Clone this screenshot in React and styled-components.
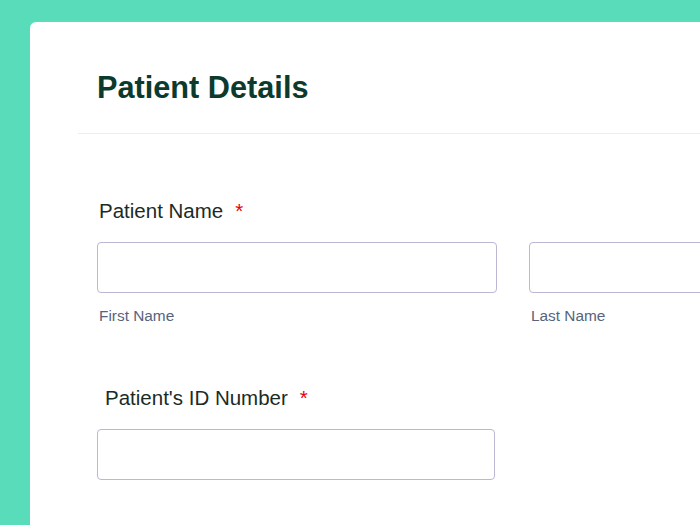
import React from 'react';
import styled, { createGlobalStyle } from 'styled-components';

const GlobalStyle = createGlobalStyle`
    html, body {
        margin: 0;
        padding: 0;
        background: #58dcb9;
    }
    body {
        font-family: "Liberation Sans", Arial, sans-serif;
    }
`;

const Page = styled.div`
    height: 525px;
    padding: 22px 0 0 30px;
    box-sizing: border-box;
    overflow: hidden;
`;

const Card = styled.div`
    background: #ffffff;
    border-top-left-radius: 6px;
    min-height: 503px;
    width: 760px;
`;

const Header = styled.div`
    margin-left: 48px;
    padding: 48px 0 27px 19px;
    border-bottom: 1px solid #ececf2;
`;

const Title = styled.h1`
    margin: 0;
    font-size: 30.7px;
    line-height: 36px;
    font-weight: bold;
    color: #0c3b2d;
`;

const Form = styled.div`
    padding: 65px 0 0 67px;
    display: flex;
    flex-direction: column;
`;

const Field = styled.div`
    display: flex;
    flex-direction: column;
    margin-bottom: ${(p) => p.$gap || 0}px;
`;

const Label = styled.label`
    display: block;
    margin: 0 0 19px ${(p) => p.$indent || 2}px;
    font-size: 20.5px;
    line-height: 24px;
    color: #1a2b26;
`;

const Required = styled.span`
    color: #e3000f;
    margin-left: 12px;
`;

const Row = styled.div`
    display: flex;
    gap: 32px;
`;

const Column = styled.div`
    display: flex;
    flex-direction: column;
    width: ${(p) => p.$width || 400}px;
    flex-shrink: 0;
`;

const Input = styled.input`
    box-sizing: border-box;
    width: 100%;
    height: 51px;
    border: 1px solid #bab8d3;
    border-radius: 4px;
    background: #ffffff;
    padding: 0 12px;
    font-family: inherit;
    font-size: 16px;
    outline: none;
`;

const SubLabel = styled.span`
    margin: 14px 0 0 2px;
    font-size: 15.4px;
    line-height: 18px;
    color: #57647d;
`;

export default function App() {
    return (
        <>
            <GlobalStyle />
            <Page>
                <Card>
                    <Header>
                        <Title>Patient Details</Title>
                    </Header>
                    <Form>
                        <Field $gap={61}>
                            <Label>
                                Patient Name<Required>*</Required>
                            </Label>
                            <Row>
                                <Column>
                                    <Input type="text" />
                                    <SubLabel>First Name</SubLabel>
                                </Column>
                                <Column>
                                    <Input type="text" />
                                    <SubLabel>Last Name</SubLabel>
                                </Column>
                            </Row>
                        </Field>
                        <Field>
                            <Label $indent={8}>
                                Patient's ID Number<Required>*</Required>
                            </Label>
                            <Column $width={398}>
                                <Input type="text" />
                            </Column>
                        </Field>
                    </Form>
                </Card>
            </Page>
        </>
    );
}
